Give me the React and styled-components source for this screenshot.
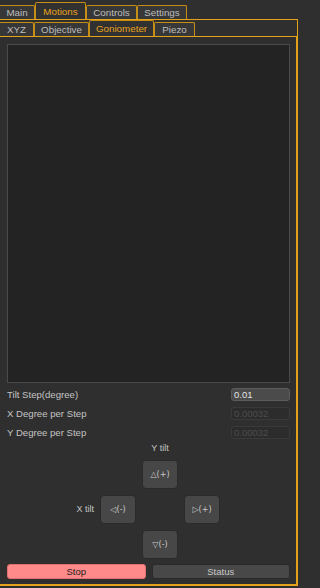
import React from 'react';
import styled, { createGlobalStyle } from 'styled-components';

const GlobalStyle = createGlobalStyle`
  html, body {
    margin: 0;
    padding: 0;
    background: #2f2f2f;
    overflow: hidden;
  }
  * {
    box-sizing: border-box;
  }
`;

const gold = '#e3a21a';
const tabGold = '#c58e16';

const outerTabs = [
  { label: 'Main', width: 36 },
  { label: 'Motions', width: 51, active: true },
  { label: 'Controls', width: 51 },
  { label: 'Settings', width: 50 },
];

const innerTabs = [
  { label: 'XYZ', width: 35 },
  { label: 'Objective', width: 55 },
  { label: 'Goniometer', width: 65, active: true },
  { label: 'Piezo', width: 41 },
];

const fields = [
  { label: 'Tilt Step(degree)', value: '0.01', enabled: true },
  { label: 'X Degree per Step', value: '0.00032' },
  { label: 'Y Degree per Step', value: '0.00032' },
];

const App = () => {
  return (
    <>
      <GlobalStyle />
      <Frame>
        <TabBar $height={19}>
          {outerTabs.map(t => (
            <Tab key={t.label} $width={t.width} $active={t.active} $tall={17} $short={14}>
              {t.label}
            </Tab>
          ))}
        </TabBar>

        <OuterPane>
          <TabBar $height={16}>
            {innerTabs.map(t => (
              <Tab key={t.label} $width={t.width} $active={t.active} $tall={16} $short={14}>
                {t.label}
              </Tab>
            ))}
          </TabBar>

          <InnerPane>
            <Canvas />

            <Fields>
              {fields.map(f => (
                <FieldRow key={f.label}>
                  <FieldLabel>{f.label}</FieldLabel>
                  <ValueBox $enabled={f.enabled}>{f.value}</ValueBox>
                </FieldRow>
              ))}
            </Fields>

            <Pad>
              <AxisLabel $col={3} $row={1} $bottom>Y tilt</AxisLabel>
              <PadButton $col={3} $row={2}>△(+)</PadButton>
              <AxisLabel $col={1} $row={3} $right>X tilt</AxisLabel>
              <PadButton $col={2} $row={3}>◁(-)</PadButton>
              <PadButton $col={4} $row={3}>▷(+)</PadButton>
              <PadButton $col={3} $row={4}>▽(-)</PadButton>
            </Pad>

            <Actions>
              <ActionButton $stop>Stop</ActionButton>
              <ActionButton>Status</ActionButton>
            </Actions>
          </InnerPane>
        </OuterPane>
      </Frame>
    </>
  );
};

export default App;

const Frame = styled.div`
  width: 301px;
  height: 588px;
  overflow: hidden;
  background: #2f2f2f;
  font-family: "Liberation Sans", Arial, sans-serif;
  font-size: 9.5px;
  color: #c8c8c8;
`;

const TabBar = styled.div`
  display: flex;
  align-items: flex-end;
  height: ${p => p.$height}px;
  margin-left: -1px;
`;

const Tab = styled.div`
  width: ${p => p.$width}px;
  height: ${p => (p.$active ? p.$tall : p.$short)}px;
  display: flex;
  align-items: center;
  justify-content: center;
  border: 1px solid ${tabGold};
  border-bottom: none;
  border-radius: 2px 2px 0 0;
  background: ${p => (p.$active ? '#313131' : '#373737')};
  color: ${p => (p.$active ? '#e8a21e' : '#bdbdbd')};
  font-size: 9.8px;
  white-space: nowrap;
`;

const OuterPane = styled.div`
  margin-left: -1px;
  width: 299px;
  height: 567px;
  border: 1px solid ${gold};
`;

const InnerPane = styled.div`
  margin-left: -1px;
  width: 298px;
  height: 549px;
  border: 1px solid ${gold};
  padding-top: 7px;
`;

const Canvas = styled.div`
  margin-left: 7px;
  width: 283px;
  height: 339px;
  background: #232323;
  border: 1px solid #4a4a4a;
`;

const Fields = styled.div`
  margin-top: 5px;
  display: flex;
  flex-direction: column;
  gap: 6px;
  padding: 0 6px 0 7px;
`;

const FieldRow = styled.div`
  display: flex;
  justify-content: space-between;
  align-items: center;
  height: 13px;
`;

const FieldLabel = styled.span`
  font-size: 9.6px;
  color: #c4c4c4;
`;

const ValueBox = styled.div`
  width: 59px;
  height: 13px;
  padding: 0 2px;
  line-height: 11px;
  border-radius: 3px;
  border: 1px solid ${p => (p.$enabled ? '#5c5c5c' : '#3a3a3a')};
  background: ${p => (p.$enabled ? '#4b4b4b' : '#2c2c2c')};
  color: ${p => (p.$enabled ? '#e2e2e2' : '#4c4c4c')};
  font-size: 9.5px;
`;

const Pad = styled.div`
  margin: 2px 0 0 74px;
  display: grid;
  grid-template-columns: 20px 36px 36px 36px;
  grid-template-rows: 13px 29px 29px 29px;
  column-gap: 6px;
  row-gap: 6px;
`;

const AxisLabel = styled.div`
  grid-column: ${p => p.$col};
  grid-row: ${p => p.$row};
  display: flex;
  align-items: ${p => (p.$bottom ? 'flex-end' : 'center')};
  justify-content: ${p => (p.$right ? 'flex-end' : 'center')};
  line-height: 11px;
  font-size: 9px;
  color: #c4c4c4;
  white-space: nowrap;
`;

const PadButton = styled.div`
  grid-column: ${p => p.$col};
  grid-row: ${p => p.$row};
  display: flex;
  align-items: center;
  justify-content: center;
  border-radius: 4px;
  border: 1px solid #2a2a2a;
  background: #474747;
  color: #c8c8c8;
  font-family: "DejaVu Sans", "Liberation Sans", sans-serif;
  font-size: 8px;
`;

const Actions = styled.div`
  margin-top: 5px;
  padding: 0 6px 0 7px;
  display: grid;
  grid-template-columns: 1fr 1fr;
  column-gap: 6px;
`;

const ActionButton = styled.div`
  height: 15px;
  display: flex;
  align-items: center;
  justify-content: center;
  border-radius: 3px;
  border: 1px solid ${p => (p.$stop ? '#e07070' : '#2a2a2a')};
  background: ${p => (p.$stop ? '#ff8a8a' : '#484848')};
  color: ${p => (p.$stop ? '#2a1a1a' : '#c8c8c8')};
  font-size: 9.5px;
`;
